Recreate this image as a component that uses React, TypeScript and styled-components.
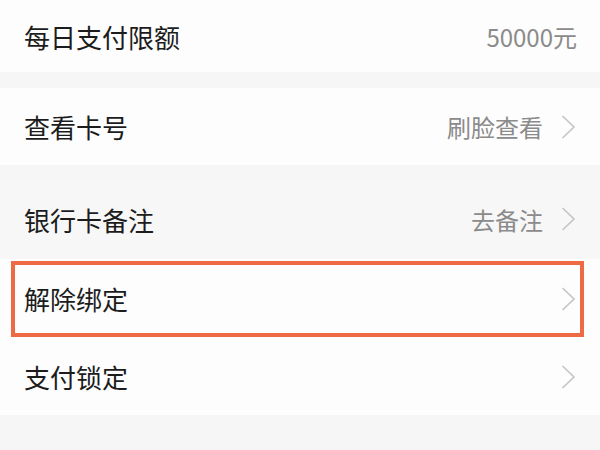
import React from 'react';
import styled, { createGlobalStyle } from 'styled-components';

const GlobalStyle = createGlobalStyle`
  html, body {
    margin: 0;
    padding: 0;
    background: #f6f6f6;
  }
  body {
    font-family: "Noto Sans CJK SC", "Noto Sans", sans-serif;
  }
`

const Page = styled.div`
  width: 600px;
  height: 450px;
  overflow: hidden;
  background: #f6f6f6;
`

const Group = styled.div<{ $gap?: number }>`
  margin-top: ${p => p.$gap ?? 0}px;
`

const Row = styled.div<{ $height: number; $tint?: boolean; $highlight?: boolean }>`
  position: relative;
  display: flex;
  align-items: center;
  height: ${p => p.$height}px;
  padding: 0 23px 0 24px;
  background: ${p => (p.$tint ? '#f7f7f7' : '#fdfdfd')};

  ${p => p.$highlight && `
    &::after {
      content: '';
      position: absolute;
      top: 2px;
      bottom: 1px;
      left: 11px;
      right: 16px;
      border: 4px solid #ee6a45;
      pointer-events: none;
    }
  `}
`

const Label = styled.span`
  flex: 1;
  font-size: 26px;
  color: #1c1c1c;
`

const Value = styled.span`
  font-size: 24px;
  color: #8b8b8b;
`

const Chevron = styled.svg`
  width: 16px;
  height: 24px;
  margin-left: 18px;
  flex-shrink: 0;
`

const Arrow = () => (
  <Chevron viewBox="0 0 16 24">
    <polyline points="1.5,1 13,12 1.5,23" fill="none" stroke="#c6c6c6" strokeWidth="1.7" />
  </Chevron>
)

interface Item {
  label: string;
  value?: string;
  arrow?: boolean;
  height: number;
  tint?: boolean;
  highlight?: boolean;
}

const groups: { gap: number; items: Item[] }[] = [
  { gap: 0, items: [{ label: '每日支付限额', value: '50000元', height: 72 }] },
  { gap: 16, items: [{ label: '查看卡号', value: '刷脸查看', arrow: true, height: 77 }] },
  {
    gap: 14,
    items: [
      { label: '银行卡备注', value: '去备注', arrow: true, height: 80, tint: true },
      { label: '解除绑定', arrow: true, height: 79, highlight: true },
      { label: '支付锁定', arrow: true, height: 77 },
    ],
  },
]

const App: React.FC = () => {
  return (
    <Page>
      <GlobalStyle />
      {groups.map((g, gi) => (
        <Group key={gi} $gap={g.gap}>
          {g.items.map(item => (
            <Row key={item.label} $height={item.height} $tint={item.tint} $highlight={item.highlight}>
              <Label>{item.label}</Label>
              {item.value && <Value>{item.value}</Value>}
              {item.arrow && <Arrow />}
            </Row>
          ))}
        </Group>
      ))}
    </Page>
  );
}

export default App;
